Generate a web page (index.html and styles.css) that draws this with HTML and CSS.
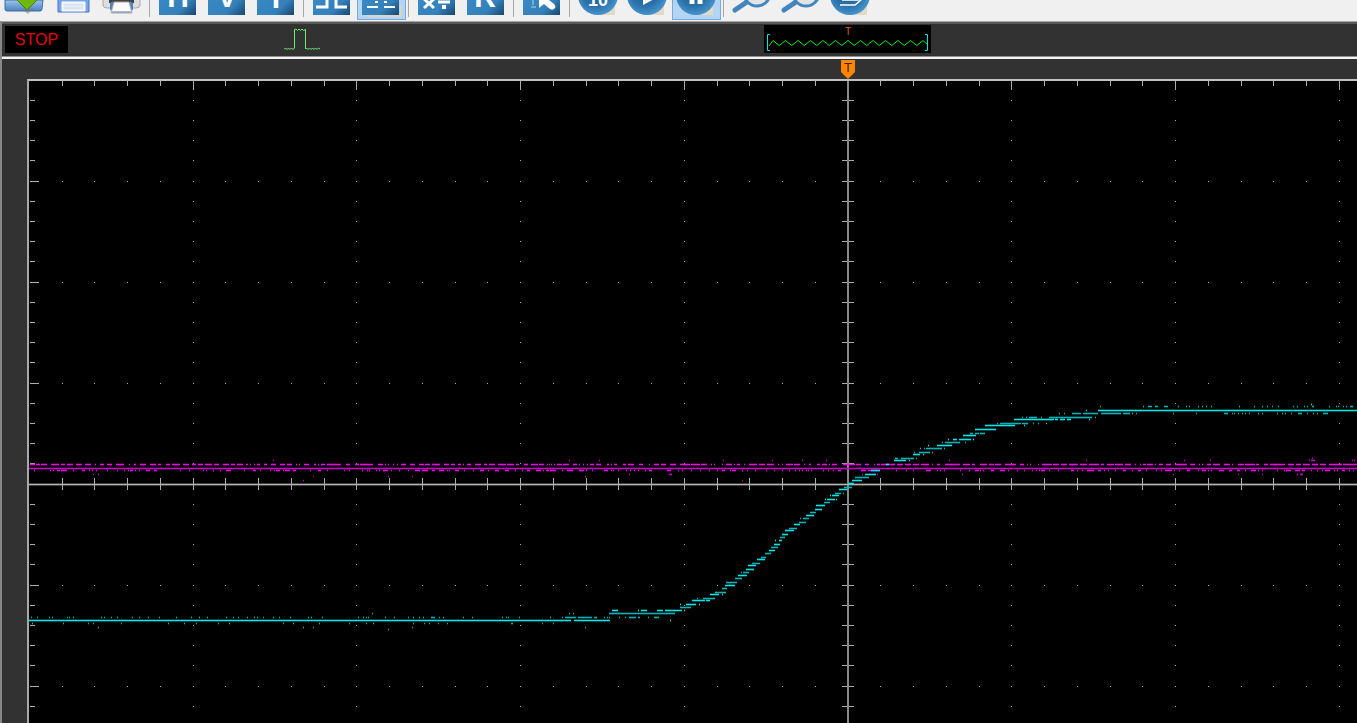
FILE: index.html
```
<!DOCTYPE html>
<html lang="en">
<head>
<meta charset="utf-8">
<title>Oscilloscope</title>
<link rel="stylesheet" href="styles.css">
</head>
<body>
<svg class="defs" width="0" height="0" aria-hidden="true">
  <defs>
    <linearGradient id="blue" x1="0" y1="0" x2="1" y2="1">
      <stop offset="0" stop-color="#3f8fcb"/><stop offset=".72" stop-color="#3380ba"/><stop offset="1" stop-color="#18476e"/>
    </linearGradient>
    <radialGradient id="ball" cx=".45" cy=".45" r=".56">
      <stop offset="0" stop-color="#1d588a"/><stop offset=".6" stop-color="#2b72aa"/><stop offset="1" stop-color="#4593cd"/>
    </radialGradient>
    <linearGradient id="folder" x1="0" y1="0" x2="0" y2="1">
      <stop offset="0" stop-color="#9cc3ea"/><stop offset="1" stop-color="#4a83c0"/>
    </linearGradient>
    <filter id="soft" x="-20%" y="-20%" width="140%" height="140%"><feGaussianBlur stdDeviation="2"/></filter>
    <g id="tile"><rect x="5" y="-22" width="37" height="37" fill="url(#blue)"/><path d="M9 10H41" stroke="#12395c" stroke-width="5" opacity=".55" filter="url(#soft)"/></g>
    <g id="disc"><path d="M28 15h13v-13z" fill="#e2dac2"/><circle cx="24" cy="-5" r="20" fill="url(#ball)"/></g>
    <g id="lens"><path d="M7 10L19 2" stroke="#4385bd" stroke-width="5" stroke-linecap="round"/><circle cx="29" cy="-7" r="13" fill="#e4e4e4" stroke="#4385bd" stroke-width="3"/></g>
  </defs>
</svg>

<header class="toolbar" role="toolbar" aria-label="Main">
  <button class="tool" aria-label="Open"><svg viewBox="0 0 49 20"><path d="M5 0H43L42 9Q42 11 40 11H7Q5 11 5 9Z" fill="url(#folder)" stroke="#3f6ea5"/><path d="M21 9L28 14L34 8" fill="#777" opacity=".5"/><path d="M16-1H38L27 10Z" fill="#6fb70c" stroke="#3f7f05"/></svg></button>
  <button class="tool" aria-label="Save"><svg viewBox="0 0 49 20"><path d="M9-5H40V12H9Z" fill="#79a5e6" stroke="#4a73c2"/><path d="M13 2H36V11H13Z" fill="#e9f0f8" stroke="#fff"/><path d="M15 5H34M15 8H34" stroke="#ccd7e5"/></svg></button>
  <button class="tool" aria-label="Print"><svg viewBox="0 0 49 20"><path d="M5-3H42V5Q42 8 38 8H9Q5 8 5 5Z" fill="#dedede" stroke="#aaa"/><path d="M11 0H36V3H11Z" fill="#404040"/><path d="M12 3L15 1V11L12 10ZM35 3L32 1V11L35 10Z" fill="#4a84bd"/><path d="M16 2H31L34 13H13Z" fill="#fafafa" stroke="#a8a8a8"/><path d="M14 12H33" stroke="#5f7fa0"/></svg></button>
  <span class="separator"></span>
  <button class="tool" aria-label="Horizontal"><svg viewBox="0 0 49 20"><use href="#tile"/><text class="letter" x="24" y="7">H</text></svg></button>
  <button class="tool" aria-label="Vertical"><svg viewBox="0 0 49 20"><use href="#tile"/><text class="letter" x="24" y="7">V</text></svg></button>
  <button class="tool" aria-label="Trigger"><svg viewBox="0 0 49 20"><use href="#tile"/><text class="letter" x="24" y="8">T</text></svg></button>
  <span class="separator"></span>
  <button class="tool" aria-label="Line display"><svg viewBox="0 0 49 20"><use href="#tile"/><path d="M8 7H19V-4M39 7H28V-4" fill="none" stroke="#fff" stroke-width="3"/></svg></button>
  <button class="tool active" aria-label="Dot display" aria-pressed="true"><svg viewBox="0 0 49 20"><path d="M10 16H44V5" fill="none" stroke="#d9d6c6" stroke-width="2"/><use href="#tile"/><path d="M10 7H21M27 7H38M18 2H21M27 2H30M18-2H21M27-2H30" stroke="#fff" stroke-width="2"/></svg></button>
  <span class="separator"></span>
  <button class="tool" aria-label="Math"><svg viewBox="0 0 49 20"><use href="#tile"/><path d="M11-1L21 8M21-1L11 8" stroke="#fff" stroke-width="3"/><path d="M25 2H37" stroke="#fff" stroke-width="3"/><path d="M29 7H33M29-2H33" stroke="#fff" stroke-width="4"/></svg></button>
  <button class="tool" aria-label="Reference"><svg viewBox="0 0 49 20"><use href="#tile"/><text class="letter" x="23" y="7">R</text></svg></button>
  <span class="separator"></span>
  <button class="tool" aria-label="Cursor"><svg viewBox="0 0 49 20"><use href="#tile"/><path d="M15-4V5M13 7H18" stroke="#b4d3ea" stroke-width="1"/><path d="M21-8V8L26 4L32 9Q35 11 37 8Q38 6 36 4L31 0L37-2Z" fill="#fff"/></svg></button>
  <span class="separator"></span>
  <button class="tool" aria-label="Ten"><svg viewBox="0 0 49 20"><use href="#disc"/><text class="number" x="24" y="6">10</text></svg></button>
  <button class="tool" aria-label="Run"><svg viewBox="0 0 49 20"><use href="#disc"/><path d="M20-10L35-3L20 5Z" fill="#fff"/></svg></button>
  <button class="tool active" aria-label="Pause" aria-pressed="true"><svg viewBox="0 0 49 20"><use href="#disc"/><path d="M20-8V4M28-8V4" stroke="#fff" stroke-width="5"/></svg></button>
  <span class="separator"></span>
  <button class="tool" aria-label="Zoom in"><svg viewBox="0 0 49 20"><use href="#lens"/></svg></button>
  <button class="tool" aria-label="Zoom out"><svg viewBox="0 0 49 20"><use href="#lens"/></svg></button>
  <button class="tool" aria-label="Refresh"><svg viewBox="0 0 49 20"><use href="#disc"/><path d="M16 0H32V-4M14 5H29L35 0V-4" fill="none" stroke="#fff" stroke-width="1.500"/></svg></button>
</header>

<main class="scope">
  <section class="status" aria-label="Status">
    <span class="state">STOP</span>
    <svg class="pulse" viewBox="0 0 38 24"><path d="M0 21.500L1.500 20L3 21.500L4.500 20L6 21.500L7.500 20L9 21.500L10.500 20V1.500L12 1L13.500 2.500L15 1L16.500 2.500L18 1L19.500 2.500L21.500 1.500V21L22.500 20L24 21.500L25.500 20L27 21.500L28.500 20L30 21.500L31.500 20L33 21.500L34.500 20L36 21" fill="none" stroke="#70f070"/></svg>
    <svg class="overview" viewBox="0 0 167 28">
      <path class="zigzag" id="zigzag"/>
      <path d="M6 9.500H3.500V25.500H6M161 9.500H163.500V25.500H161" fill="none" stroke="#00e8e8"/>
      <text x="84" y="10">T</text>
    </svg>
  </section>
  <section class="workspace">
    <svg class="marker" viewBox="0 0 14 19"><path d="M0 0H14V12L7 19L0 12Z" fill="#ff8400"/><text x="7" y="12">T</text></svg>
    <svg class="plot" role="img" aria-label="Waveform"><g id="canvas" transform="translate(-29 -81)"></g></svg>
  </section>
</main>
<script src="scope.js"></script>
</body>
</html>
```
FILE: styles.css
```
* {
  box-sizing: border-box;
}

body {
  margin: 0;
  height: 100vh;
  display: flex;
  flex-direction: column;
  overflow: hidden;
  background: #323232;
  font-family: "Liberation Sans", Arial, sans-serif;
}

.defs {
  position: absolute;
}

.toolbar {
  display: flex;
  flex: none;
  height: 21px;
  background: #f0f0f0;
}

.tool {
  flex: none;
  width: 49px;
  height: 20px;
  padding: 0;
  border: 0;
  background: transparent;
}

.tool svg {
  display: block;
  width: 49px;
  height: 20px;
}

.tool.active {
  background: #b4d4f4;
  box-shadow: inset 1px -1px #78a8e4, inset -1px 0 #78a8e4;
}

.separator {
  flex: none;
  width: 7px;
  height: 17px;
  background: linear-gradient(#a8a8a8, #a8a8a8) 2px 0 / 1px 100% no-repeat;
}

.letter,
.number {
  fill: #fff;
  font-size: 30px;
  font-weight: bold;
  text-anchor: middle;
}

.number {
  font-size: 18px;
}

.scope {
  flex: 1;
  min-height: 0;
  display: flex;
  flex-direction: column;
  border-top: 1px solid #a8a8a8;
  border-left: 2px solid #888;
}

.status {
  flex: none;
  display: flex;
  align-items: flex-start;
  height: 35px;
  padding: 1px 0 0 3px;
  border-top: 2px solid #585858;
  border-bottom: 1px solid #909090;
}

.state {
  width: 63px;
  height: 27px;
  margin-top: 1px;
  background: #000;
  color: #e80000;
  font-size: 16px;
  line-height: 27px;
  text-align: center;
}

.pulse {
  width: 38px;
  height: 24px;
  margin: 3px 0 0 216px;
}

.overview {
  width: 167px;
  height: 28px;
  margin-left: 442px;
  background: #000;
}

.overview text {
  fill: #d86800;
  font-size: 10px;
  text-anchor: middle;
}

.zigzag {
  fill: none;
  stroke: #00f000;
}

.workspace {
  flex: 1;
  min-height: 0;
  display: flex;
  flex-direction: column;
  padding-left: 25px;
  border-top: 2px solid #f4f4f4;
}

.marker {
  flex: none;
  width: 14px;
  height: 19px;
  margin: 1px 0 0 814px;
}

.marker text {
  fill: #442000;
  font-size: 13px;
  text-anchor: middle;
}

.plot {
  flex: 1;
  min-height: 0;
  width: 100%;
  background: #000;
  border-top: 2px solid #c0c0c0;
  border-left: 2px solid #a8a8a8;
}

.grid {
  fill: #acacac;
}

.axis-glow {
  fill: #404040;
}

.axis {
  fill: #b4b4b4;
}

.axis-vertical {
  fill: #888;
}

.dot {
  fill: #a8a8a8;
}

.magenta {
  fill: #f000f0;
}

.magenta-base {
  fill: #c800c8;
}

.cyan {
  fill: #00e8ec;
}

.cyan-dim {
  fill: #00b4b8;
}

.halo {
  opacity: .3;
}
```
FILE: scope.js
```
const NS = "http://www.w3.org/2000/svg";
const canvas = document.getElementById("canvas");
const CX = 848, CY = 484, STEP_X = 32.75, STEP_Y = 20.2;
const RIGHT = 4000, BOTTOM = 2000;

function path(d, cls) {
  const p = document.createElementNS(NS, "path");
  p.setAttribute("d", d);
  p.setAttribute("class", cls);
  canvas.appendChild(p);
}
const box = (x, y, w, h) => `M${x} ${y}h${w}v${h}h${-w}z`;

// Graticule: ticks on the frame and axes, dots on the division lines
let ticks = "", dots = "";
for (let i = -24; i < 97; i++) {
  const x = Math.floor(CX + i * STEP_X);
  const major = i % 5 === 0;
  ticks += box(x, 81, 1, major ? 9 : 5) + box(x, 478, 1, 12);
  for (let j = -15; j < 75; j += 5) dots += box(x, Math.floor(CY + j * STEP_Y), 1, 1);
  if (major) for (let j = -19; j < 75; j++) if (j % 5) dots += box(x, Math.floor(CY + j * STEP_Y), 1, 1);
}
for (let j = -19; j < 75; j++) {
  const y = Math.floor(CY + j * STEP_Y);
  ticks += box(30, y, j % 5 === 0 ? 9 : 5, 1) + box(842, y, 12, 1);
}
path(box(29, 483, RIGHT, 3), "axis-glow");
path(dots, "dot");
path(ticks, "grid");
path(box(847, 80, 2, BOTTOM), "axis-vertical");
path(box(29, 484, RIGHT, 1), "axis");

function row(y, list, cls, height = 1) {
  let d = "", halo = "";
  for (const item of list.split(",")) {
    const [a, b] = item.split("-").map(Number);
    const w = b ? b - a : 1;
    d += box(a, y, w, height);
    halo += box(a, y - 1, w, height + 2);
  }
  path(halo, cls + " halo");
  path(d, cls);
}

// Channel 2
row(468, "29-4000", "magenta-base");
row(464, "30-35,36-40,41-47,51-59,61-65,67-73,76-82,85-91,95,100-104,107-112,116-124,129,134-136,140-146,150-156,158-161,166-170,172-180,183-189,192-196,198-203,205-212,214-219,223-229,231-235,237-243,246-248,250,254,257-260,264-267,271-276,280-285,287-292,296,299,304-309,314-316,318,321-325,327-341,346-350,355-359,360-373,378-383,385,388,393,397,401-406,410-415,419-424,425-430,432-440,444-449,451-455,458-461,463,467-471,475-481,484-487,489-495,498-506,507-514,516-519,524-528,531-538,539-544,547,549,551,554,557-562,563-569,573-577,579,583,587,590-594,596-601,607-609,611,614-617,623-626,628-634,639-643,649,654-659,661-666,670-676,680-690,691-700,701-707,711,714,722,726-732,734,737-740,744,749-757,759-765,767-774,778,782,786-793,794-800,804,809-811,817-820,822-827,829,832-837,843-855,856-861,865-869,874,877-880,881-895,897-903,905-911,913-919,921-929,932,937-940,945-960,963-970,972-975,980-987,989-994,995-1001,1005-1016,1020-1024,1027,1030,1038,1042-1052,1053-1059,1061-1067,1069-1078,1080-1087,1089-1099,1101-1104,1107-1114,1115-1123,1125-1131,1135,1140,1143-1146,1147-1153,1155,1159-1163,1166-1171,1175-1187,1190-1195,1199,1202,1207-1211,1213-1220,1224-1230,1232,1238-1244,1245-1255,1256-1259,1264-1268,1270-1285,1288-1294,1296-1301,1303-1310,1312-1318,1320-1326,1329-1342,1343-1357", "magenta");
row(470, "34,50,53,57-60,61-67,73,82-85,89,92,96,107,117,124,128,130-133,135,139,146-150,154-157,180,189,203,206,213,220,226-231,244,253-256,260,270,274,276-280,283,285-290,293-296,310,318-321,327,344,349,362,367,369,376,379,383-388,391,399,408,415-420,422-428,432-435,439-444,447,449,455-459,464,473,480-484,488,495-499,505-509,515,522,527-530,536-541,543,546-549,550-556,562,567-573,579-584,586,592,604-608,611,613,618,626,630,634,638,645,649-652,667-671,678,682,691,700,709,717,722-725,730,732-736,742,747,755,766,774,782,789,795,799,802,806,808,811,823,828,833,838-841,861-866,868-880,896,906,913,926-931,937,940,944,960,969,975-979,980,983,991-994,1000-1005,1008,1017,1024,1032,1036,1039,1041-1045,1049,1058,1071-1074,1077,1082,1087-1094,1098-1101,1104,1108,1115,1123-1126,1132,1138-1141,1146,1156,1161,1165-1172,1174,1179,1187-1190,1198,1202-1206,1208,1211,1219-1224,1229-1232,1237-1240,1245,1251-1256,1258,1262,1277,1284,1286-1291,1295-1300,1302-1305,1311,1317,1322,1325-1330,1334,1337,1342-1345,1349,1353", "magenta");
row(460, "273,569,599,723,772,802,826,949,1086,1184,1210,1309,1311-1315,1352,1354", "magenta-base");
row(458, "1312", "magenta-base");
row(474, "93,98,629,669-672,862,877,962,1173,1238,1262,1297,1300-1303", "magenta-base");
row(476, "313,388,412,585", "magenta-base");
row(480, "303,742", "magenta-base");

// Channel 1: full-brightness rows
const bright = {
  620: "29-571,574-610,670",
  610: "612-618,638,641-647,657-663,665-682,684",
  604: "680,686-696,699", 600: "692-705,706-710", 594: "710-719,722",
  585: "725-735", 575: "738-747", 569: "746-754", 565: "748-756",
  559: "757-765", 550: "769-775", 544: "774-780", 540: "775,779-782",
  534: "782-788", 530: "785-794", 524: "794-800", 515: "806-814",
  509: "815-822", 505: "816-825", 499: "825,827-835,836", 495: "830,832-839",
  489: "839-847", 483: "848-854", 480: "852-862", 474: "865-876", 470: "871-880",
  464: "886-889", 460: "894-906,909", 454: "913-920,923", 445: "928,937-952",
  439: "948,953-957,959-971,973", 435: "963-976", 429: "975-996", 425: "985-1015,1024",
  419: "1014-1054,1055-1058,1060-1065,1067-1071,1089", 410: "1086,1098-4000", 404: "1311"
};
for (const y in bright) row(+y, bright[y], "cyan");

// Channel 1: rows that fall between sample levels
const dim = {
  627: "98,303,313,412,585", 629: "388",
  623: "32,63,88,93,121,168,184,196,218,229,283,293,319,349,366,373,413,424,429,438,447,511-513,542,553",
  617: "31,37,49,52,67,69,73,101,104,111,117,132,139,148,159,176,191,199,207,226,233,238,247,254,257,263,273,279,290,308,311,322,358,363,366,368,385,394,408,413,419,423,431-435,439,443,463,472,502,506,508,519,550,562,565-576,578-592,594-597,604,607,609,619,625,629-636,638-640,648,654-659",
  613: "372,569,573,609-675", 607: "680-691", 598: "697,703-715", 592: "715-726",
  588: "722-727", 582: "726-737", 578: "735-742", 572: "741,743-749", 563: "752-760",
  557: "761-766", 553: "765-771", 547: "771-778", 537: "780-785", 528: "789-797",
  522: "799-806", 518: "800,803-809", 512: "810-816", 502: "824-830", 493: "835-841,843",
  487: "844-852", 477: "855-869", 458: "895-898,901-914,916", 452: "914,919-930,932",
  448: "920,924,926-942,944", 442: "942,945-960,965", 433: "970-973,975-979,980-985",
  423: "997,1000-1021,1022-1028,1033,1038,1046",
  417: "1022,1026,1029-1037,1041,1049-1092,1095",
  413: "1059,1064,1072-1081,1083-1098,1101-1121,1123-1130,1132,1136,1173,1196,1224-1228,1232,1234,1238,1242,1245,1249,1258,1262,1277,1282,1285,1291,1298-1302,1307,1313,1317,1323-1328",
  406: "1100,1143,1148-1152,1155-1158,1164-1168,1178,1186,1189,1198,1202,1206,1211,1239,1254,1262,1267,1272,1278,1293,1297,1304,1307,1312-1314,1329,1336,1338,1343,1346,1350-1353"
};
for (const y in dim) row(+y, dim[y], "cyan-dim");

// Memory overview
let zig = "M5 21";
for (let i = 0; i < 25; i++) zig += `L${9 + i * 6.25} ${i % 2 ? 20.5 : 15.5}`;
document.getElementById("zigzag").setAttribute("d", zig + "L163 19");
```
